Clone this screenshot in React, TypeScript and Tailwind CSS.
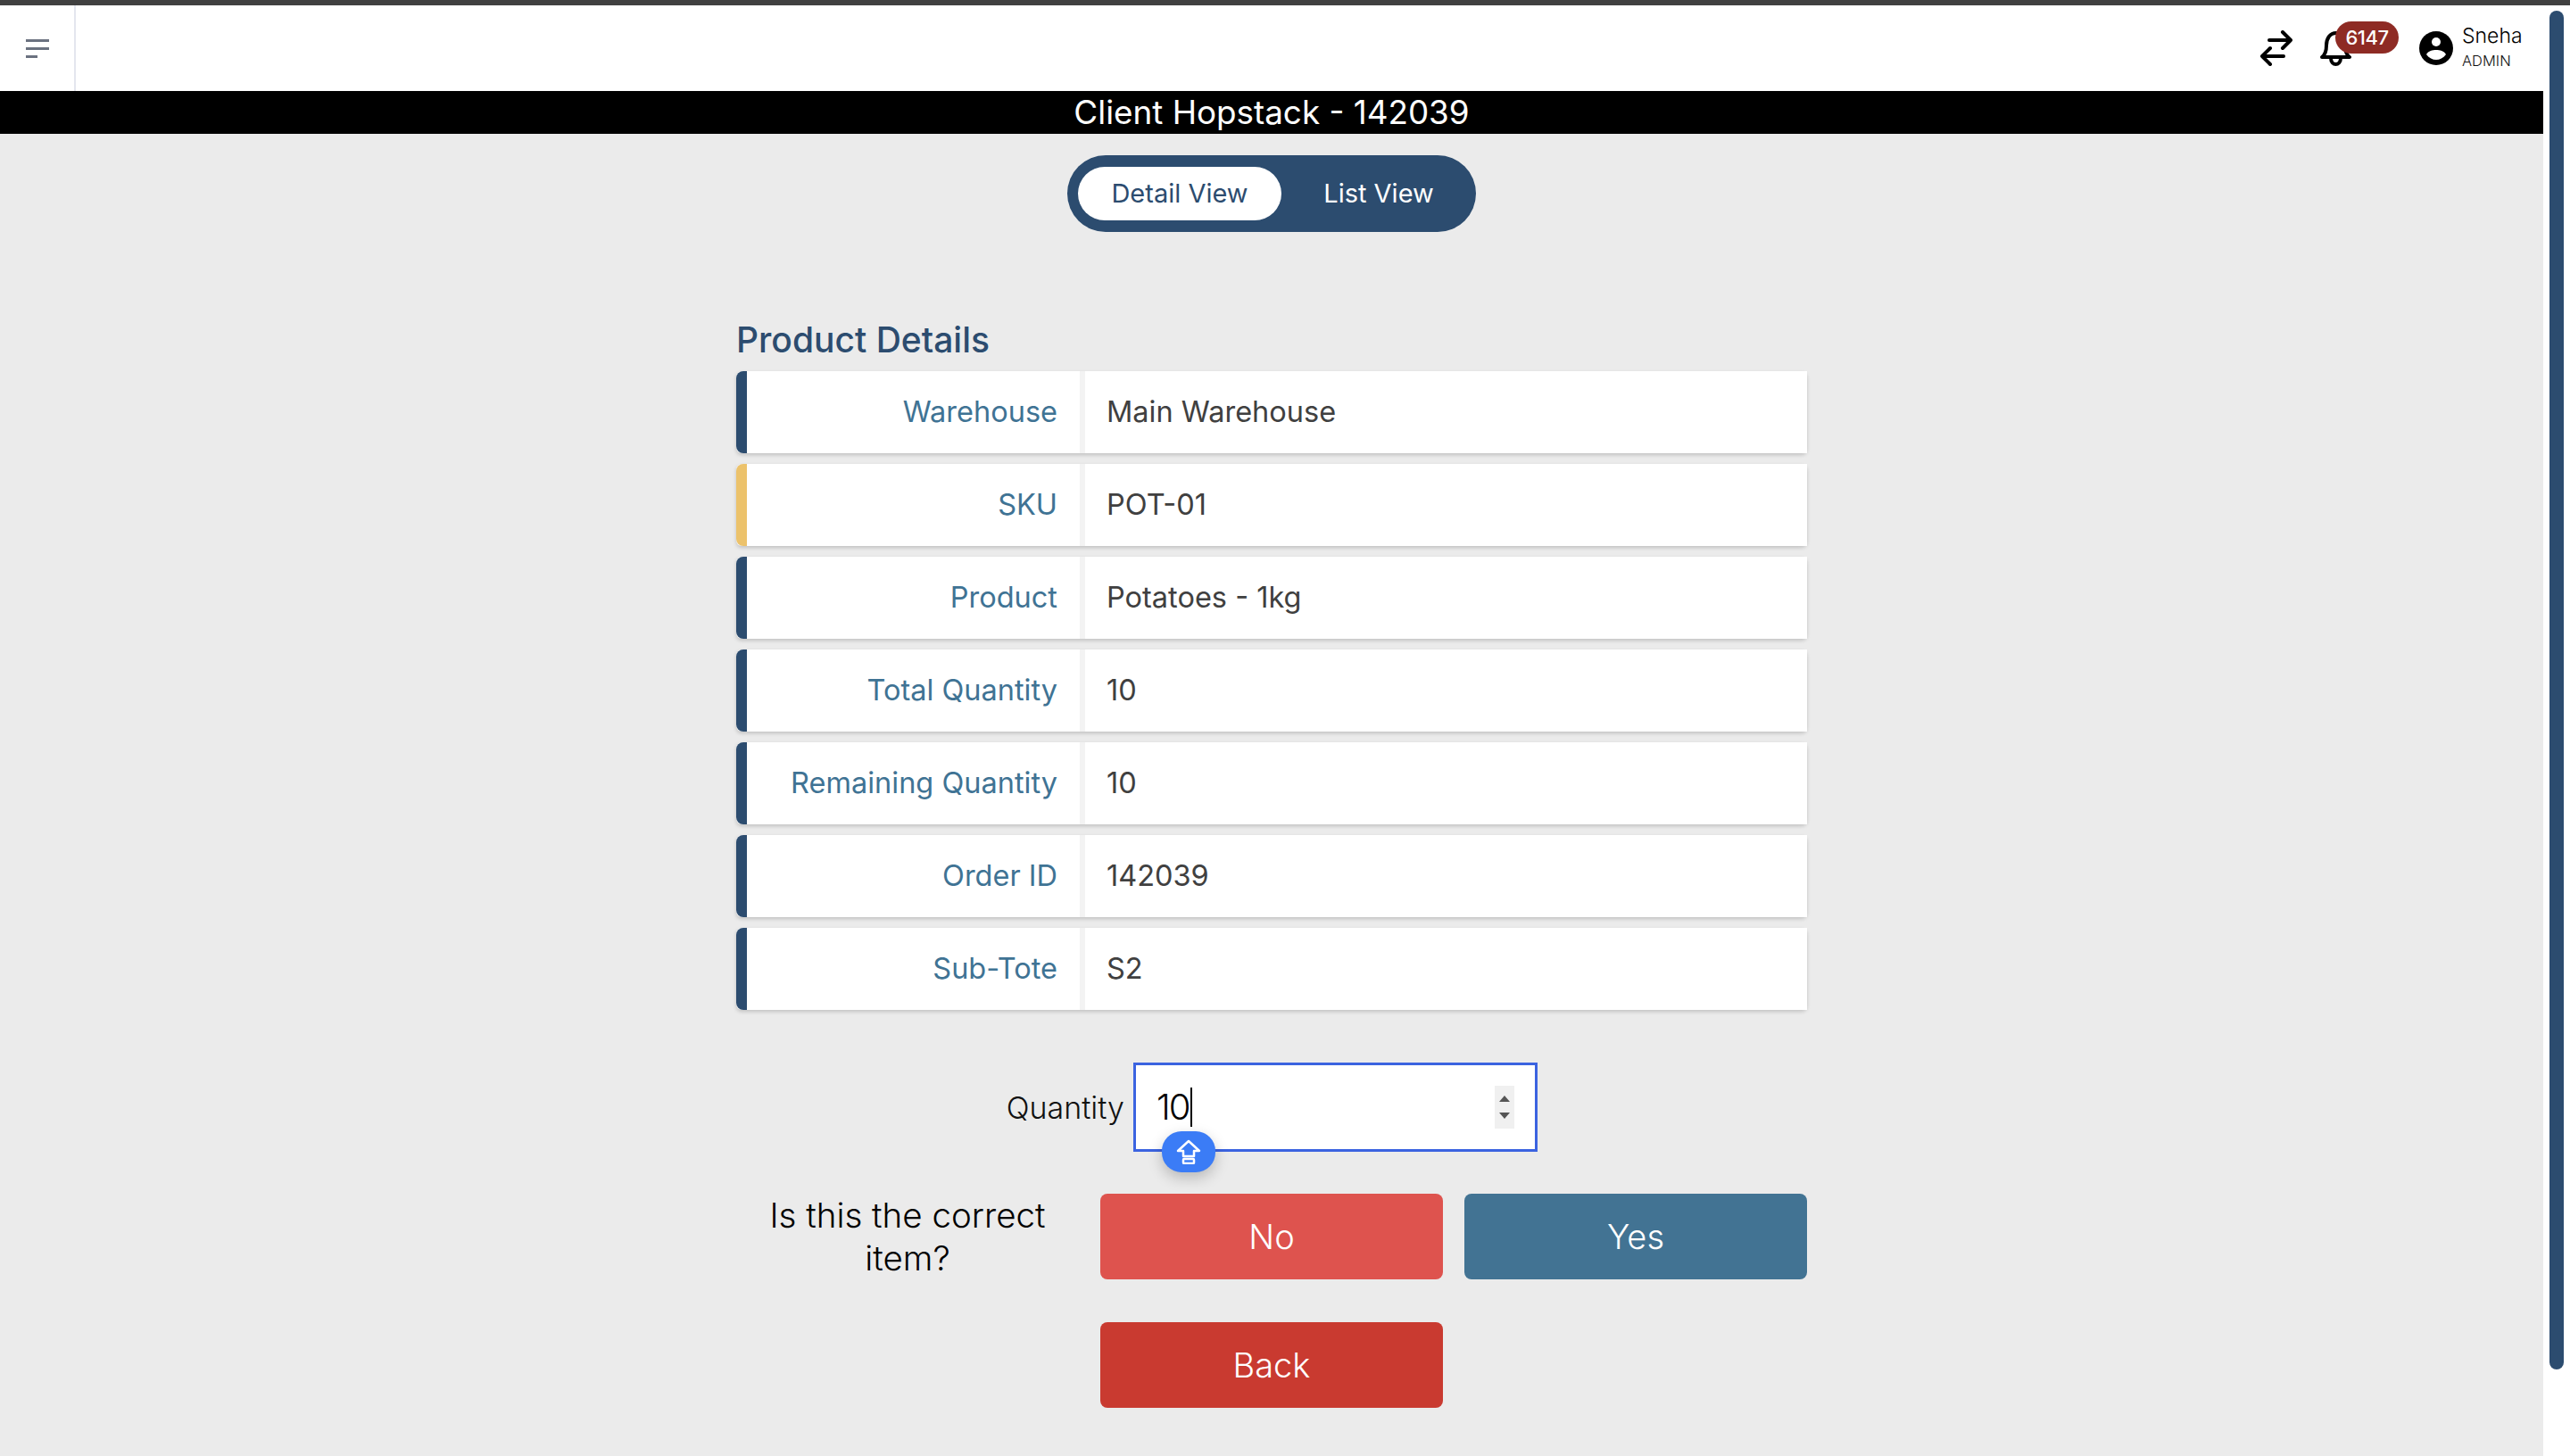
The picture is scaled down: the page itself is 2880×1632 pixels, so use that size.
import React from 'react';

interface DetailRow {
  label: string;
  value: string;
  accent?: boolean;
}

const rows: DetailRow[] = [
  { label: 'Warehouse', value: 'Main Warehouse' },
  { label: 'SKU', value: 'POT-01', accent: true },
  { label: 'Product', value: 'Potatoes - 1kg' },
  { label: 'Total Quantity', value: '10' },
  { label: 'Remaining Quantity', value: '10' },
  { label: 'Order ID', value: '142039' },
  { label: 'Sub-Tote', value: 'S2' },
];

const Header = () => (
  <div className="flex h-[96px] items-stretch bg-white">
    <div className="flex w-[85px] flex-col justify-center gap-[6px] border-r-2 border-[#e4e6ee] pl-[29px]">
      <div className="h-[3px] w-[26px] bg-[#6b7280]" />
      <div className="h-[3px] w-[26px] bg-[#6b7280]" />
      <div className="h-[3px] w-[13px] bg-[#6b7280]" />
    </div>
    <div className="flex flex-1 items-center justify-end pr-[25px]">
      {/* swap */}
      <svg width="36" height="40" viewBox="0 0 36 40" fill="none" stroke="black" strokeWidth="4" strokeLinecap="round" strokeLinejoin="round">
        <path d="M10 11H34M25 2L34 11L25 20" />
        <path d="M26 29H2M11 20L2 29L11 38" />
      </svg>
      {/* bell + badge */}
      <div className="relative ml-[31px] mr-[76px] h-[40px] w-[35px]">
        <svg width="35" height="40" viewBox="0 0 35 40" fill="none" stroke="black" strokeWidth="4" strokeLinecap="round" strokeLinejoin="round">
          <path d="M2 30C6 27 7 22 7 17C7 9 11 3 18 3C25 3 28 9 28 17C28 22 29 27 33 30Z" />
          <path d="M12 31C12 36 15 38 17.500 38C20 38 23 36 23 31" />
        </svg>
        <div className="absolute left-[17px] top-[-10px] flex h-[36px] w-[71px] items-center justify-center rounded-full bg-[#8e2b24] text-[22px] font-medium tracking-[-0.5px] text-white">
          6147
        </div>
      </div>
      {/* user */}
      <svg width="38" height="38" viewBox="0 0 38 38">
        <circle cx="19" cy="19" r="19" fill="black" />
        <circle cx="19" cy="12" r="5" fill="white" />
        <path d="M8 26C10 22 15 21 19 21C23 21 28 22 30 26C27 30 23 32 19 32C15 32 11 30 8 26Z" fill="white" />
      </svg>
      <div className="ml-[10px] mb-[6px] flex w-[66px] flex-col">
        <span className="text-[23px] font-light leading-[32px] text-black">Sneha</span>
        <span className="mt-[2px] text-[16.500px] font-light leading-[20px] text-[#111]">ADMIN</span>
      </div>
    </div>
  </div>
);

const ViewToggle = () => (
  <div className="mt-[24px] flex h-[86px] w-[458px] items-center self-center rounded-[43px] bg-[#2c4c6f] pl-[12px] text-[29px]">
    <div className="flex h-[60px] w-[228px] items-center justify-center rounded-[30px] bg-white text-[#2c4c6f]">
      Detail View
    </div>
    <div className="flex w-[218px] items-center justify-center text-white">List View</div>
  </div>
);

const ShiftBadge = () => (
  <div className="absolute left-[29px] top-[74px] flex h-[46px] w-[60px] items-center justify-center rounded-[22px] bg-[#3b7cf6] shadow-[0_6px_16px_rgba(0,0,0,0.22)]">
    <svg width="28" height="28" viewBox="0 0 28 28" fill="none" stroke="white" strokeWidth="2.500" strokeLinejoin="round">
      <path d="M14 2L26 13H20V19H8V13H2Z" />
      <rect x="8" y="22" width="12" height="5" rx="1" />
    </svg>
  </div>
);

export default function App() {
  return (
    <div className="flex h-[1632px] w-[2880px] flex-col overflow-hidden bg-white font-['Inter',sans-serif]">
      <div className="h-[6px] bg-[#404040]" />
      <div className="flex min-h-0 flex-1">
        <div className="flex w-[2850px] flex-col">
          <Header />
          <div className="flex h-[48px] items-center justify-center bg-black text-[36.800px] text-white">
            Client Hopstack - 142039
          </div>
          <div className="flex flex-1 flex-col bg-[#ebebeb]">
            <ViewToggle />
            <div className="mx-auto flex w-[1200px] flex-col">
              <h2 className="mt-[92px] mb-[7px] text-[39px] font-medium leading-[57px] text-[#2c4c6f]">Product Details</h2>
              <div className="flex flex-col gap-[12px]">
                {rows.map((row) => (
                  <div key={row.label} className="flex h-[92px] gap-[6px] rounded-[6px] bg-[#f3f3f3] text-[32.500px] shadow-[0_2px_4px_rgba(0,0,0,0.18)]">
                    <div className={`flex w-[385px] items-center justify-end rounded-l-[8px] border-l-[12px] bg-white pr-[25px] text-[#3f7394] ${row.accent ? 'border-[#ecc26b]' : 'border-[#2c4c6f]'}`}>
                      {row.label}
                    </div>
                    <div className="flex flex-1 items-center bg-white pl-[24px] text-[#404040]">{row.value}</div>
                  </div>
                ))}
              </div>

              <div className="mt-[59px] flex h-[100px] items-center">
                <div className="w-[445px] pr-[10px] text-right text-[34px] font-light text-[#111]">Quantity</div>
                <div className="relative flex h-[100px] w-[453px] items-center justify-between border-[3px] border-[#3b63e0] bg-white pl-[23px] pr-[23px]">
                  <div className="flex items-center text-[40px] font-light tracking-[-2px] text-black">
                    10
                    <span className="ml-[2px] h-[44px] w-[2px] bg-black" />
                  </div>
                  <div className="flex h-[48px] w-[22px] flex-col items-center justify-center gap-[12px] bg-[#f0f0f0]">
                    <svg width="12" height="7" viewBox="0 0 12 7"><path d="M6 0L12 7H0Z" fill="#555" /></svg>
                    <svg width="12" height="7" viewBox="0 0 12 7"><path d="M6 7L12 0H0Z" fill="#555" /></svg>
                  </div>
                  <ShiftBadge />
                </div>
              </div>

              <div className="mt-[47px] flex gap-[24px]">
                <div className="flex w-[384px] items-center justify-center text-center text-[38.500px] font-light leading-[48px] text-black">
                  <span className="w-[330px]">Is this the correct item?</span>
                </div>
                <button className="h-[96px] w-[384px] rounded-[8px] bg-[#de534e] text-[38px] font-light text-white">No</button>
                <button className="h-[96px] w-[384px] rounded-[8px] bg-[#427393] text-[38px] font-light text-white">Yes</button>
              </div>
              <div className="mt-[48px] flex pl-[408px]">
                <button className="h-[96px] w-[384px] rounded-[8px] bg-[#c93a30] text-[38px] font-light text-white">Back</button>
              </div>
            </div>
          </div>
        </div>
        <div className="flex w-[30px] justify-center bg-white pt-[6px] pb-[97px]">
          <div className="h-full w-[16px] rounded-full bg-[#2c4c6f]" />
        </div>
      </div>
    </div>
  );
}
